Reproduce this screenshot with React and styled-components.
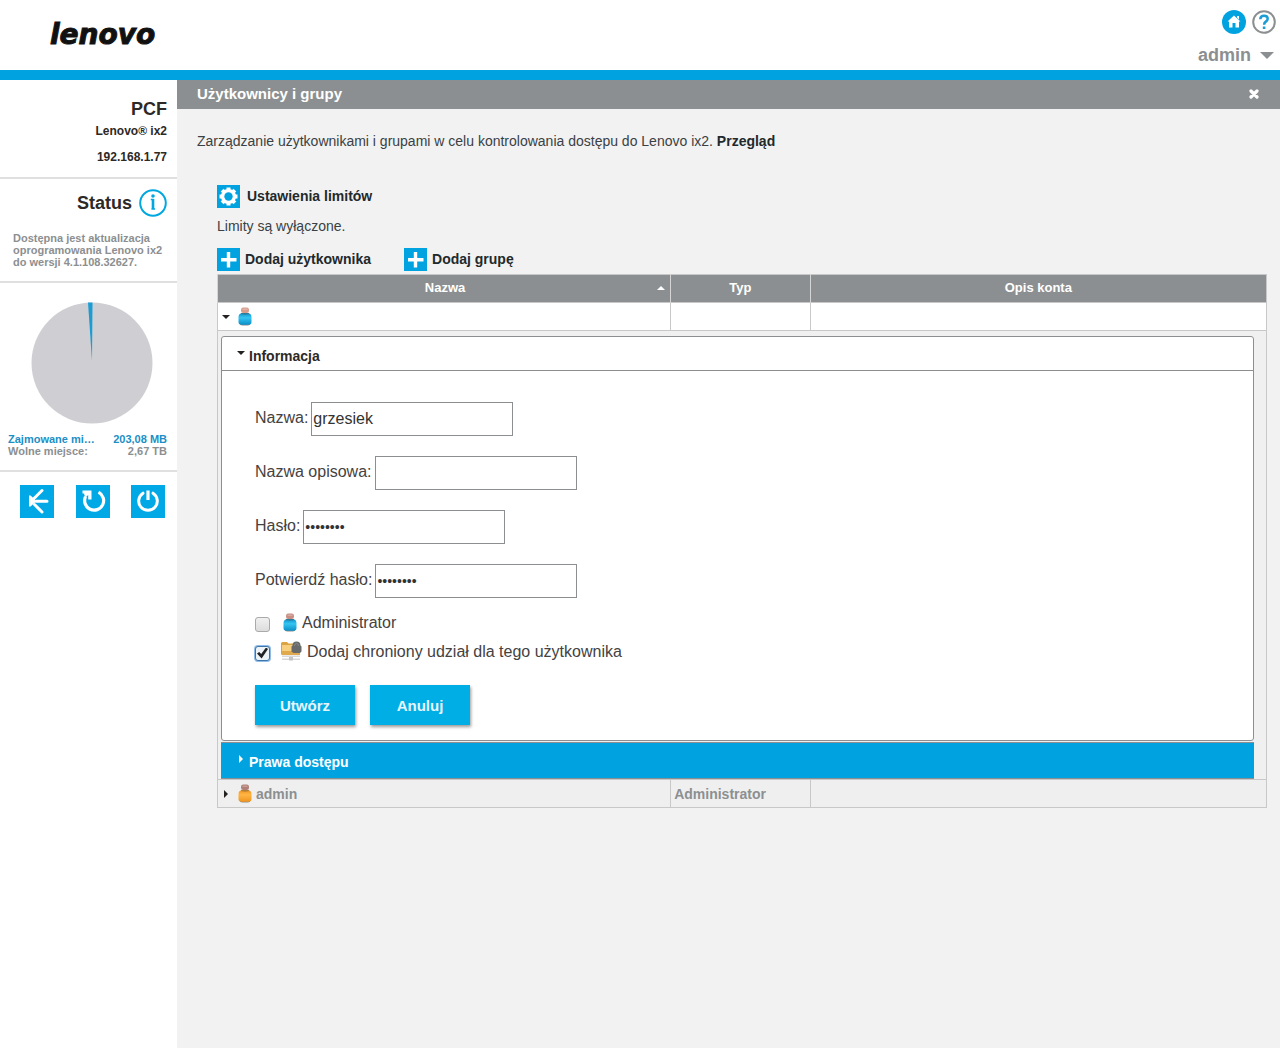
import React, { Fragment, useState } from "react";
import styled, { createGlobalStyle, css } from "styled-components";

const FIELDS = [
  { id: "name", label: "Nazwa:", type: "text", value: "grzesiek" },
  { id: "description", label: "Nazwa opisowa:", type: "text", value: "" },
  { id: "password", label: "Hasło:", type: "password", value: "12345678" },
  { id: "confirm", label: "Potwierdź hasło:", type: "password", value: "12345678" },
];

const UserIcon = ({ id, head, light, dark }) => (
  <svg width="14" height="19" viewBox="0 0 14 19" aria-hidden="true">
    <defs>
      <linearGradient id={id} x1="0" y1="0" x2="0" y2="1">
        <stop offset="0" stopColor={dark} />
        <stop offset="0.4" stopColor={light} />
        <stop offset="1" stopColor={dark} />
      </linearGradient>
    </defs>
    <path d="M1.5 16h11q0 2.500-3 2.500h-5q-3 0-3-2.500z" fill="#8d8d8d" />
    <path d="M3.500 6h7q3 1 3 4v5q0 2.800-3 2.800h-7q-3 0-3-2.800v-5q0-3 3-4z" fill={`url(#${id})`} />
    <path d="M3 6h8v1q-4 1.600-8 0z" fill="#555" opacity="0.4" />
    <rect x="3" y="0.500" width="8" height="5.500" rx="2.200" fill={head} />
    <path d="M4.500 2.200h5" stroke="#fff" strokeWidth="1.200" opacity="0.3" />
  </svg>
);

const ShareIcon = () => (
  <svg width="22" height="20" viewBox="0 0 22 20" aria-hidden="true">
    <path d="M1 2.500Q1 1 2.500 1H7l1.500 1.500H14V14H2.500Q1 14 1 12.500z" fill="#d9a441" />
    <path d="M2 4h11v6H2z" fill="#f7cf7e" />
    <path d="M2 10h18v4H2z" fill="#e0a94c" />
    <path d="M2 14.500h18V16H2zM2 17.500h7V19H2zM13 17.500h7V19h-7z" fill="#d8d8d8" />
    <path d="M9 16h4v3.500H9z" fill="#c4c4c4" />
    <path d="M12.500 4.500q0-4 4-4t4 4l1 1v5L20 12h-6.500l-2-1.500v-5z" fill="#67696b" />
    <path d="M14.500 5q0-2.500 2-2.500t2 2.500" fill="none" stroke="#86888a" />
  </svg>
);

const PlusIcon = () => (
  <svg width="23" height="23" viewBox="0 0 23 23" aria-hidden="true">
    <path d="M0 0h23v23H0z" fill="#00a3e0" />
    <path d="M11.500 4v15.500M4 11.800h15.500" stroke="#fff" strokeWidth="3.400" />
  </svg>
);

const GearIcon = () => (
  <svg width="23" height="23" viewBox="0 0 23 23" aria-hidden="true">
    <path d="M0 0h23v23H0z" fill="#00a3e0" />
    {[0, 45, 90, 135].map((angle) => (
      <path
        key={angle}
        d="M9.500 2.500h4v18h-4z"
        fill="#fff"
        transform={`rotate(${angle} 11.500 11.500)`}
      />
    ))}
    <circle cx="11.500" cy="11.500" r="7.600" fill="#fff" />
    <circle cx="11.500" cy="11.500" r="4.200" fill="#00a3e0" />
  </svg>
);

const Arrow = ({ dir, color = "#222" }) => (
  <svg width="8" height="8" viewBox="0 0 8 8" aria-hidden="true">
    <path
      d={{ down: "M0 2h8L4 6z", right: "M2 0v8l4-4z", up: "M0 6h8L4 2z" }[dir]}
      fill={color}
    />
  </svg>
);

const Field = ({ id, label, type, value }) => (
  <FieldRow>
    <label htmlFor={id}>{label}</label>
    <TextInput id={id} type={type} defaultValue={value} />
  </FieldRow>
);

const Sidebar = () => (
  <Aside>
    <Device>
      <h2>PCF</h2>
      <p>Lenovo® ix2</p>
      <p>192.168.1.77</p>
    </Device>
    <Status>
      <h2>
        Status
        <svg width="28" height="28" viewBox="0 0 28 28" aria-hidden="true">
          <circle cx="14" cy="14" r="12.800" fill="#fff" stroke="#00a8df" strokeWidth="2" />
          <circle cx="14" cy="7" r="1.800" fill="#00a8df" />
          <path d="M11.800 10.500h2.200V20M12.500 20h3.500" fill="none" stroke="#00a8df" strokeWidth="1.400" />
          <path d="M14 10v10" stroke="#00a8df" strokeWidth="2.600" />
        </svg>
      </h2>
      <p>Dostępna jest aktualizacja oprogramowania Lenovo ix2 do wersji 4.1.108.32627.</p>
    </Status>
    <Storage>
      <svg width="122" height="122" viewBox="0 0 122 122" role="img" aria-label="Zajmowane miejsce">
        <circle cx="61" cy="61" r="60.500" fill="#cfcfd3" />
        <path d="M61 59L57 0.500h4.500z" fill="#1b9cd3" />
      </svg>
      <Usage $used>
        <dt>Zajmowane mi…</dt>
        <dd>203,08 MB</dd>
      </Usage>
      <Usage>
        <dt>Wolne miejsce:</dt>
        <dd>2,67 TB</dd>
      </Usage>
    </Storage>
    <Actions>
      <SquareButton type="button" aria-label="Identyfikuj">
        <svg width="34" height="33" viewBox="0 0 34 33">
          <path d="M9 10.500h1.500L15 14.500v3L10.500 21.500H9z" fill="#fff" />
          <path d="M14.500 13L22 5.500M16 16.200h11M14.500 19.500l7.500 7.500" fill="none" stroke="#fff" strokeWidth="3" strokeLinecap="round" />
        </svg>
      </SquareButton>
      <SquareButton type="button" aria-label="Uruchom ponownie">
        <svg width="34" height="33" viewBox="0 0 34 33">
          <path d="M22.500 7.200a9.500 9.500 0 1 1-13 4.500" fill="none" stroke="#fff" strokeWidth="3.200" />
          <path d="M6.500 5.500h9v9h-3.300V10l-2.700 2.500L8 9l.5-.5h-2z" fill="#fff" />
        </svg>
      </SquareButton>
      <SquareButton type="button" aria-label="Wyłącz">
        <svg width="34" height="33" viewBox="0 0 34 33">
          <path d="M12 8.200a9.300 9.300 0 1 0 10 0" fill="none" stroke="#fff" strokeWidth="3" strokeLinecap="round" />
          <path d="M17 5.500v9.500" stroke="#fff" strokeWidth="3.200" />
        </svg>
      </SquareButton>
    </Actions>
  </Aside>
);

const UserForm = () => {
  const [admin, setAdmin] = useState(false);
  const [share, setShare] = useState(true);

  return (
    <Form onSubmit={(e) => e.preventDefault()}>
      {FIELDS.map((field) => (
        <Field key={field.id} {...field} />
      ))}
      <Options>
        <Option $gap={13}>
          <Checkbox checked={admin} onChange={() => setAdmin(!admin)} />
          <UserIcon id="option-user" head="#c98f85" light="#35c4f2" dark="#0b8fc8" />
          Administrator
        </Option>
        <Option $gap={10}>
          <Checkbox checked={share} onChange={() => setShare(!share)} />
          <ShareIcon />
          Dodaj chroniony udział dla tego użytkownika
        </Option>
      </Options>
      <Buttons>
        <PrimaryButton type="submit">Utwórz</PrimaryButton>
        <PrimaryButton type="button">Anuluj</PrimaryButton>
      </Buttons>
    </Form>
  );
};

const UsersTable = () => (
  <Table>
    <colgroup>
      <col className="name" />
      <col className="type" />
      <col />
    </colgroup>
    <thead>
      <tr>
        <th>
          <SortHead>
            <span>Nazwa</span>
            <Arrow dir="up" color="#fff" />
          </SortHead>
        </th>
        <th>Typ</th>
        <th>Opis konta</th>
      </tr>
    </thead>
    <tbody>
      <Row $open>
        <td>
          <UserName>
            <Arrow dir="down" />
            <UserIcon id="new-user" head="#d79c8c" light="#35c4f2" dark="#0b8fc8" />
          </UserName>
        </td>
        <td />
        <td />
      </Row>
      <tr>
        <Details colSpan="3">
          <Panel>
            <PanelHead type="button">
              <Arrow dir="down" />
              Informacja
            </PanelHead>
            <UserForm />
          </Panel>
          <PanelHead type="button" $blue>
            <Arrow dir="right" color="#fff" />
            Prawa dostępu
          </PanelHead>
        </Details>
      </tr>
      <Row>
        <td>
          <UserName>
            <Arrow dir="right" />
            <UserIcon id="admin-user" head="#b08078" light="#ffb545" dark="#f0951e" />
            admin
          </UserName>
        </td>
        <td>Administrator</td>
        <td />
      </Row>
    </tbody>
  </Table>
);

export default function App() {
  return (
    <Fragment>
      <GlobalStyle />
      <Page>
        <Header>
          <Logo href="#">lenovo</Logo>
          <Tools>
            <div>
              <IconButton type="button" aria-label="Strona główna">
                <svg width="24" height="24" viewBox="0 0 24 24">
                  <circle cx="12" cy="12" r="12" fill="#00a3e0" />
                  <path d="M12 5.500l6.500 6H17V17.500h-3.500V13h-3v4.500H7V11.500H5.500zM15 6h2v3.500l-2-2z" fill="#fff" />
                </svg>
              </IconButton>
              <IconButton type="button" aria-label="Pomoc">
                <svg width="24" height="24" viewBox="0 0 24 24">
                  <circle cx="12" cy="12" r="10.800" fill="#fff" stroke="#8c8f91" strokeWidth="2" />
                  <path d="M8.300 9.300q0-3.600 3.700-3.600 3.700 0 3.700 3 0 1.600-1.900 2.900-1.700 1.200-1.700 3.200" fill="none" stroke="#1b9cd3" strokeWidth="2.500" />
                  <path d="M10.800 16.500h2.600v2.500h-2.600z" fill="#1b9cd3" />
                </svg>
              </IconButton>
            </div>
            <UserMenu type="button">
              admin
              <svg width="14" height="7" viewBox="0 0 14 7">
                <path d="M0 0h14L7 7z" fill="#8c8f91" />
              </svg>
            </UserMenu>
          </Tools>
        </Header>
        <Body>
          <Sidebar />
          <Main>
            <TitleBar>
              <h1>Użytkownicy i grupy</h1>
              <IconButton type="button" aria-label="Zamknij">
                <svg width="10" height="10" viewBox="0 0 10 10">
                  <path d="M2 2l6 6M8 2L2 8" stroke="#fff" strokeWidth="3.200" strokeLinecap="round" />
                </svg>
              </IconButton>
            </TitleBar>
            <Intro>
              Zarządzanie użytkownikami i grupami w celu kontrolowania dostępu do Lenovo ix2.{" "}
              <a href="#">Przegląd</a>
            </Intro>
            <Content>
              <IconLink href="#" $gap={7}>
                <GearIcon />
                Ustawienia limitów
              </IconLink>
              <p>Limity są wyłączone.</p>
              <Links>
                <IconLink href="#" $gap={5}>
                  <PlusIcon />
                  Dodaj użytkownika
                </IconLink>
                <IconLink href="#" $gap={5}>
                  <PlusIcon />
                  Dodaj grupę
                </IconLink>
              </Links>
              <UsersTable />
            </Content>
          </Main>
        </Body>
      </Page>
    </Fragment>
  );
}

const GlobalStyle = createGlobalStyle`
  * {
    box-sizing: border-box;
  }

  body {
    margin: 0;
    background: #fff;
    color: #333;
    font-family: "Liberation Sans", Arial, sans-serif;
    font-size: 14px;
  }

  h1, h2, p, dl, dd {
    margin: 0;
  }

  button, input {
    font-family: inherit;
  }

  a {
    color: inherit;
    text-decoration: none;
  }

  svg {
    display: block;
    flex: none;
  }
`;

const Page = styled.div`
  display: flex;
  flex-direction: column;
  min-height: 100vh;
`;

const Header = styled.header`
  display: flex;
  justify-content: space-between;
  height: 80px;
  padding: 10px 4px 0 50px;
  border-bottom: 10px solid #00a3e0;
`;

const Logo = styled.a`
  padding-top: 10px;
  color: #111;
  font: italic bold 28px/30px "DejaVu Sans", sans-serif;
  -webkit-text-stroke: 1px #111;
`;

const Tools = styled.div`
  display: flex;
  flex-direction: column;
  align-items: flex-end;
  gap: 11px;

  > div {
    display: flex;
    gap: 6px;
  }
`;

const IconButton = styled.button`
  padding: 0;
  border: 0;
  background: none;
  cursor: pointer;
`;

const UserMenu = styled(IconButton)`
  display: flex;
  align-items: center;
  gap: 9px;
  padding-right: 2px;
  color: #8c8f91;
  font-size: 18px;
  font-weight: 700;
  line-height: 20px;
`;

const Body = styled.div`
  display: flex;
  flex: 1;
`;

const Aside = styled.aside`
  flex: none;
  width: 177px;
  background: #fff;

  h2 {
    color: #2d2926;
    font-size: 18px;
    line-height: 22px;
  }

  > * {
    border-bottom: 2px solid #e0e0e0;
  }

  > :last-child {
    border: 0;
  }
`;

const Device = styled.section`
  padding: 18px 10px 12px;
  color: #2d2926;
  font-size: 12px;
  font-weight: 700;
  line-height: 16px;
  text-align: right;

  p {
    padding-top: 3px;
  }

  p + p {
    padding-top: 10px;
  }
`;

const Status = styled.section`
  padding: 10px 10px 13px 13px;

  h2 {
    display: flex;
    align-items: center;
    justify-content: flex-end;
    gap: 7px;
  }

  p {
    margin: 15px -5px 0 0;
    color: #8c8f91;
    font-size: 11px;
    font-weight: 700;
    line-height: 12px;
  }
`;

const Storage = styled.section`
  padding: 19px 10px 13px 8px;

  > svg {
    margin: 0 0 9px 23px;
  }
`;

const Usage = styled.dl`
  display: flex;
  justify-content: space-between;
  color: ${({ $used }) => ($used ? "#1b8fc6" : "#8c8f91")};
  font-size: 11px;
  font-weight: 700;
  line-height: 12px;
  white-space: nowrap;
`;

const Actions = styled.div`
  display: flex;
  justify-content: space-between;
  padding: 13px 12px 0 20px;
`;

const SquareButton = styled(IconButton)`
  background: #00a9e6;
`;

const Main = styled.main`
  flex: 1;
  min-width: 0;
  background: #f2f2f2;
  color: #3a4144;
`;

const TitleBar = styled.div`
  display: flex;
  align-items: center;
  justify-content: space-between;
  height: 29px;
  padding: 0 21px 2px 20px;
  background: #8c8f91;
  color: #fff;

  h1 {
    font-size: 15px;
    line-height: 20px;
  }
`;

const Intro = styled.p`
  padding: 22px 20px 0;
  line-height: 20px;

  a {
    color: #22292c;
    font-weight: 700;
  }
`;

const Content = styled.div`
  padding: 34px 13px 40px 40px;

  > p {
    padding: 8px 0 12px;
    line-height: 20px;
  }
`;

const Links = styled.div`
  display: flex;
  gap: 33px;
  padding-bottom: 3px;
`;

const IconLink = styled.a`
  display: flex;
  gap: ${({ $gap }) => $gap}px;
  width: max-content;
  color: #22292c;
  font-weight: 700;
  line-height: 22px;
`;

const Table = styled.table`
  width: 100%;
  border: 1px solid #c8c8c8;
  border-collapse: collapse;
  table-layout: fixed;

  .name {
    width: 43.2%;
  }

  .type {
    width: 13.3%;
  }

  th {
    height: 28px;
    padding: 0 3px 2px;
    border-left: 1px solid #d5d5d5;
    background: #8c8f91;
    color: #fff;
    font-size: 13px;
  }
`;

const SortHead = styled.div`
  display: flex;
  align-items: center;
  padding: 0 2px 0 12px;

  span {
    flex: 1;
  }
`;

const Row = styled.tr`
  height: 28px;
  background: ${({ $open }) => ($open ? "#fff" : "#f0efef")};
  color: #8c8f91;
  font-weight: 700;

  td {
    padding: 0 3px;
    border: 1px solid #c8c8c8;
  }
`;

const UserName = styled.div`
  display: flex;
  align-items: center;
  padding-left: 1px;

  svg + svg {
    margin: 0 4px 0 8px;
  }
`;

const Details = styled.td`
  padding: 5px 12px 0 3px;
  background: #f0f0f0;
`;

const Panel = styled.div`
  margin-bottom: 1px;
  border: 1px solid #8c8f91;
  border-radius: 3px;
  background: #fff;
`;

const PanelHead = styled.button`
  display: flex;
  align-items: center;
  gap: 4px;
  width: 100%;
  height: 34px;
  padding: 4px 15px 0;
  border: 0;
  border-bottom: 1px solid #8c8f91;
  background: none;
  color: #2d2926;
  font-size: 14px;
  font-weight: 700;

  svg {
    margin-bottom: 6px;
  }

  ${({ $blue }) =>
    $blue &&
    css`
      height: 37px;
      padding: 3px 16px 0;
      border-top: 1px solid #8c8f91;
      background: #00a3e0;
      color: #fff;
    `}
`;

const Form = styled.form`
  display: flex;
  flex-direction: column;
  gap: 20px;
  padding: 31px 33px 15px;
  color: #45423f;
  font-size: 16px;
`;

const FieldRow = styled.div`
  display: flex;
  align-items: center;
  gap: 3px;

  label {
    padding-bottom: 2px;
  }
`;

const TextInput = styled.input`
  width: 202px;
  height: 34px;
  padding: 0 1px;
  border: 1px solid #8c8f91;
  background: #fff;
  color: #333;
  font-size: ${({ type }) => (type === "password" ? 14 : 16)}px;
`;

const Options = styled.div`
  display: flex;
  flex-direction: column;
  gap: 9px;
  margin-top: -5px;
  padding-bottom: 2px;
`;

const Option = styled.label`
  display: flex;
  align-items: center;
  height: 20px;

  svg {
    margin: 0 5px 2px ${({ $gap }) => $gap}px;
  }
`;

const Checkbox = styled.input.attrs({ type: "checkbox" })`
  appearance: none;
  display: grid;
  place-items: center;
  width: 15px;
  height: 15px;
  margin: 2px 0 0;
  border: 1px solid #aaa;
  border-radius: 3px;
  background: linear-gradient(#f0f0f0, #ddd);

  &:checked {
    border-color: #3f76a8;
    background: #eef3f7;
    box-shadow: 0 0 0 1px #8ebce6;
  }

  &:checked::after {
    content: "";
    width: 11px;
    height: 11px;
    background: #222;
    clip-path: polygon(0 55%, 20% 40%, 38% 60%, 82% 0, 100% 14%, 42% 100%);
  }
`;

const Buttons = styled.div`
  display: flex;
  gap: 15px;
  padding-top: 1px;
`;

const PrimaryButton = styled.button`
  width: 100px;
  height: 40px;
  border: 0;
  background: #00aee6;
  box-shadow: 1px 2px 3px rgba(0, 0, 0, 0.4);
  color: #e8f4fb;
  font-size: 15px;
  font-weight: 700;
`;
